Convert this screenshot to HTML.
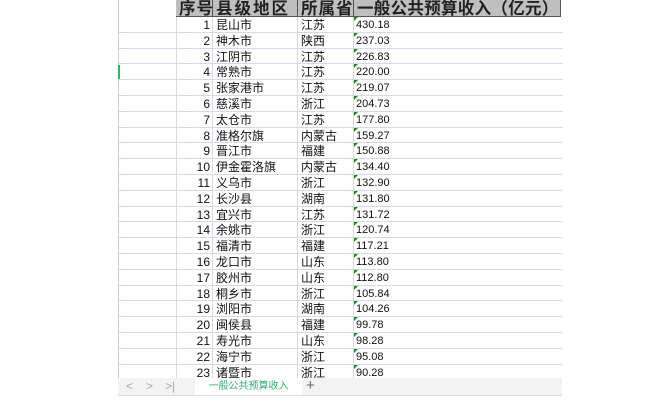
<!DOCTYPE html><html><head><meta charset="utf-8"><style>
body{margin:0;width:654px;height:413px;background:#fff;position:relative;overflow:hidden;font-family:"Liberation Sans","Noto Sans CJK SC",sans-serif}
.g{position:absolute;left:118px;top:0;width:444px;height:378px;overflow:hidden;border-left:1px solid #c8ccd8}
.hd{position:absolute;left:57px;top:0;width:384px;height:16px;background:#bfbfbf;border-bottom:1px solid #555;border-right:1px solid #555;overflow:hidden}
.hd div{position:absolute;top:-1px;height:17px;border-left:1px solid #555;font-size:16.5px;line-height:17px;font-weight:bold;color:#222;font-family:"Noto Sans CJK SC",sans-serif;padding-left:3px;letter-spacing:1px;white-space:nowrap}
.r{position:absolute;left:0;width:444px;height:15.8px;border-bottom:1px solid #d6d9e4;box-sizing:border-box;font-size:12px;line-height:17px;color:#111}
.r span{position:absolute;top:0;height:15.8px}
.n{left:57px;width:36px;text-align:right;border-left:1px solid #d6d9e4;padding-right:2px;box-sizing:border-box}
.c{left:93px;width:85px;border-left:1px solid #d6d9e4;padding-left:3px}
.p{left:178px;width:56px;border-left:1px solid #d6d9e4;padding-left:3px}
.v{left:234px;width:207px;border-left:1px solid #d6d9e4;border-right:1px solid #d6d9e4;padding-left:2px;font-size:11px}
.v:before{content:"";position:absolute;left:0;top:0;border-top:4px solid #1a8a1a;border-right:4px solid transparent}
.tab{position:absolute;left:118px;top:378px;width:444px;height:17px;background:#f3f3f3;border-bottom:1px solid #ddd;font-size:10px;color:#aaa}
</style></head><body>
<div class="g">
<div class="hd"><div style="left:-1px;width:34px">序号</div><div style="left:36px;width:82px;letter-spacing:2px">县级地区</div><div style="left:121px;width:53px">所属省</div><div style="left:177px;width:204px;letter-spacing:0.3px">一般公共预算收入（亿元）</div></div>
<div id="rows"></div>
</div>
<div style="position:absolute;left:118px;top:65px;width:2px;height:14px;background:#2db36b"></div>
<div class="tab">
<span style="position:absolute;left:8px;top:1px;font-size:12px">&lt;</span><span style="position:absolute;left:28px;top:1px;font-size:12px">&gt;</span><span style="position:absolute;left:47px;top:1px;font-size:12px">&gt;|</span>
<div style="position:absolute;left:77px;top:0;width:107px;height:17px;background:#fff;color:#2db36b;font-size:10px;line-height:17px;text-align:center">一般公共预算收入</div>
<span style="position:absolute;left:188px;top:-1px;font-size:15px;color:#666">+</span>
</div>
<script>
var d=[["昆山市","江苏","430.18"],["神木市","陕西","237.03"],["江阴市","江苏","226.83"],["常熟市","江苏","220.00"],["张家港市","江苏","219.07"],["慈溪市","浙江","204.73"],["太仓市","江苏","177.80"],["准格尔旗","内蒙古","159.27"],["晋江市","福建","150.88"],["伊金霍洛旗","内蒙古","134.40"],["义乌市","浙江","132.90"],["长沙县","湖南","131.80"],["宜兴市","江苏","131.72"],["余姚市","浙江","120.74"],["福清市","福建","117.21"],["龙口市","山东","113.80"],["胶州市","山东","112.80"],["桐乡市","浙江","105.84"],["浏阳市","湖南","104.26"],["闽侯县","福建","99.78"],["寿光市","山东","98.28"],["海宁市","浙江","95.08"],["诸暨市","浙江","90.28"]];
var h="";d.forEach(function(r,i){h+='<div class="r" style="top:'+(17+i*15.8)+'px"><span class="n">'+(i+1)+'</span><span class="c">'+r[0]+'</span><span class="p">'+r[1]+'</span><span class="v">'+r[2]+'</span></div>'});
document.getElementById("rows").innerHTML=h;
</script>
</body></html>
